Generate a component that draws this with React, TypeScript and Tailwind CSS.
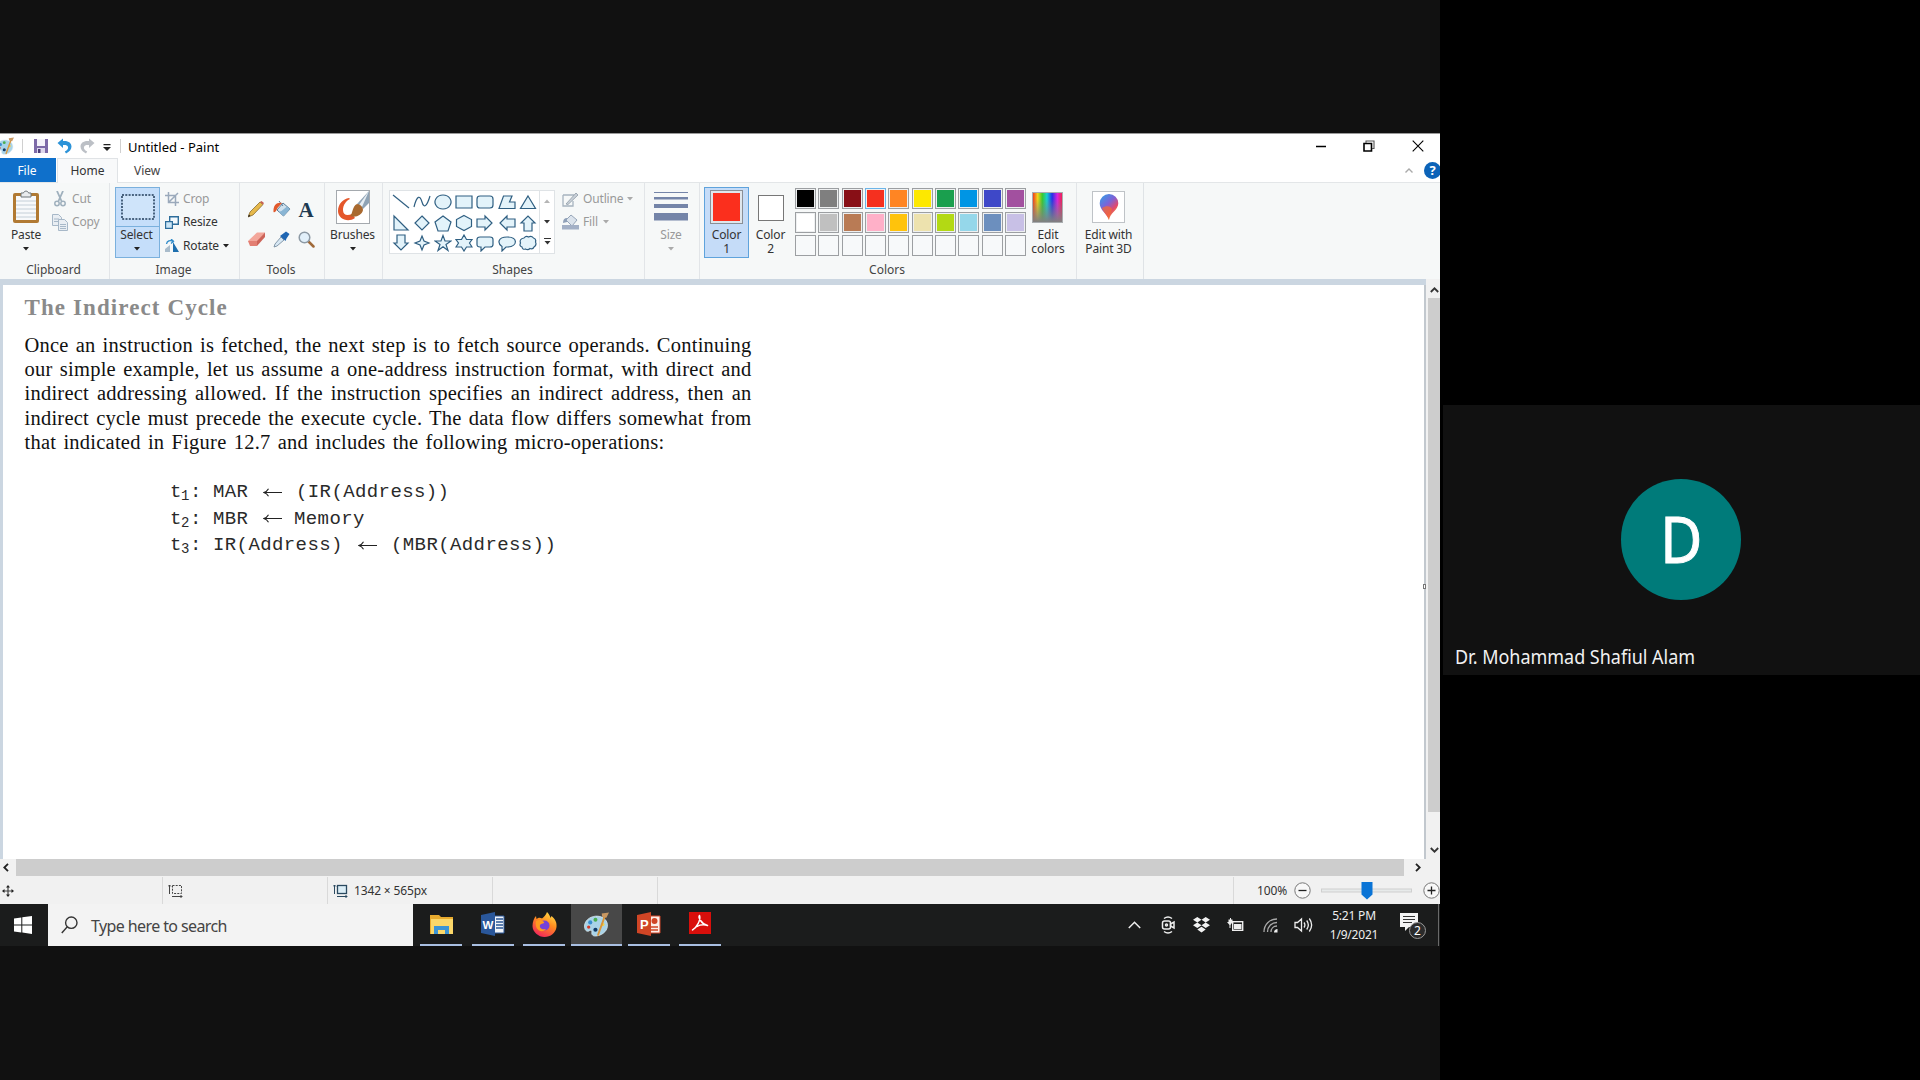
import React from "react";

const ui = "font-['Noto_Sans','Open_Sans',sans-serif]";

function Caret({ className = "text-[#222]" }: { className?: string }) {
  return (
    <svg width="6" height="4" viewBox="0 0 6 4" className={`block shrink-0 ${className}`}>
      <path d="M0 0h6L3 3.6z" fill="currentColor" />
    </svg>
  );
}

function PaletteIcon({ size }: { size: number }) {
  return (
    <svg width={size} height={size} viewBox="0 0 24 24" className="block shrink-0">
      <path d="M11 4C5 4.500 0 9 .5 14.500 1 19 4 19 5 18c1.500-1 3-.5 2.500 1.500C7 22 9 23.500 12 23c7-1 11-6 10.500-11C22 7 17 3.500 11 4z" fill="#a9d3e8" stroke="#dfeef6" strokeWidth=".7" />
      <circle cx="6" cy="10" r="2" fill="#3a8fd0" />
      <circle cx="11" cy="7.500" r="1.900" fill="#4caf50" />
      <circle cx="4.500" cy="14.500" r="1.600" fill="#d43a2a" />
      <circle cx="11" cy="17" r="2" fill="#123a66" />
      <circle cx="18" cy="12" r="1.700" fill="#f2d24b" />
      <path d="M13.500 22 20 4" stroke="#d9963c" strokeWidth="1.800" strokeLinecap="round" />
      <path d="M17 1.500 24 .5l-2.500 5-4-.8z" fill="#c99862" />
    </svg>
  );
}

function TitleBar() {
  return (
    <div className="flex h-[25px] items-center border-t border-[#9a9a9a] bg-white">
      <div className="flex w-[22px] items-center overflow-hidden">
        <div className="-ml-[4px]"><PaletteIcon size={18} /></div>
      </div>
      <div className="h-[14px] w-px bg-[#d0d0d0]" />
      <svg width="16" height="16" viewBox="0 0 16 16" className="ml-[10px] block">
        <path d="M1 1h14v14H1z" fill="#7d6aa8" />
        <path d="M4 1h8v7H4z" fill="#f4f2fa" />
        <path d="M4 10h8v5H4z" fill="#ddd7ec" />
        <path d="M5 11h2.500v4H5z" fill="#4d3d78" />
      </svg>
      <svg width="16" height="16" viewBox="0 0 16 16" className="ml-[8px] block">
        <path d="M.5 5 6 .5V3c5.500-.5 8.500 2 8.500 5.500 0 3-2 5-5.500 7l-1.200-2C10.500 12 11.500 10.500 11 9 10.500 7.300 9 6.800 6 7v3z" fill="#2c93d8" />
      </svg>
      <svg width="16" height="16" viewBox="0 0 16 16" className="ml-[6px] block">
        <path d="M15.500 5 10 .5V3C4.500 2.500 1.500 5 1.500 8.500c0 3 2 5 5.500 7l1.200-2C5.500 12 4.500 10.500 5 9c.5-1.700 2-2.200 5-2v3z" fill="#bcc0c6" />
      </svg>
      <svg width="8" height="8" viewBox="0 0 8 8" className="ml-[8px] mt-[3px] block">
        <path d="M.5 0h7v1.300h-7zM0 3h8L4 7z" fill="#222" />
      </svg>
      <div className="ml-[9px] h-[14px] w-px bg-[#d0d0d0]" />
      <div className={`${ui} ml-[7px] pt-px text-[13px] leading-[24px] text-black`}>Untitled - Paint</div>
      <div className="ml-auto flex items-center">
        <svg width="12" height="12" viewBox="0 0 12 12" className="block"><path d="M1 6.500h10" stroke="#000" strokeWidth="1.500" /></svg>
        <svg width="12" height="12" viewBox="0 0 12 12" className="ml-[36px] block" fill="none" stroke="#000">
          <path d="M1 3.500h7.500V11H1z" strokeWidth="1.600" />
          <path d="M3 3V1h8v7.500H9" stroke="#555" strokeWidth="1.100" />
        </svg>
        <svg width="12" height="12" viewBox="0 0 12 12" className="ml-[37px] mr-[16px] block"><path d="M.7.7l10.600 10.600M11.300.7.7 11.300" stroke="#000" strokeWidth="1.100" /></svg>
      </div>
    </div>
  );
}

function TabRow() {
  return (
    <div className={`${ui} flex h-[25px] items-stretch border-b border-[#e3e6e8] bg-white text-[12px] leading-[25px]`}>
      <div className="w-[56px] bg-[#0f70cb] pr-[2px] text-center text-white">File</div>
      <div className="ml-px h-[25px] w-[61px] border-x border-t border-[#e0e3e6] bg-[#f8f9fa] text-center leading-[24px] text-[#333]">Home</div>
      <div className="ml-[16px] text-[#444]">View</div>
      <div className="ml-auto flex items-center">
        <svg width="8" height="5" viewBox="0 0 8 5" className="block"><path d="M.5 4.500 4 1l3.500 3.500" fill="none" stroke="#aaa" strokeWidth="1.400" /></svg>
        <div className="ml-[11px] h-[17px] w-[16px] overflow-hidden">
          <div className="h-[17px] w-[17px] rounded-full bg-[#0c63b8] text-center text-[13px] font-bold leading-[17px] text-white">?</div>
        </div>
      </div>
    </div>
  );
}

function Group({ label, width, children, last }: { label?: string; width: string; children: React.ReactNode; last?: boolean }) {
  return (
    <div className={`flex shrink-0 flex-col border-r ${last ? "border-[#dfe3e6]" : "border-[#e2e5e8]"} ${width}`}>
      <div className="flex h-[79px] items-start">{children}</div>
      <div className="h-[16px] pr-[2px] text-center text-[12px] leading-[16px] tracking-normal text-[#444]">{label}</div>
    </div>
  );
}

function ClipboardGroup() {
  return (
    <Group label="Clipboard" width="w-[110px]">
      <div className="ml-[3px] flex w-[46px] flex-col items-center pt-[7px]">
        <svg width="28" height="34" viewBox="0 0 28 34" className="block">
          <rect x="1" y="3" width="26" height="30" rx="2" fill="#b17a33" />
          <path d="M4 6h20v24H4z" fill="#f7f9fb" />
          <path d="M4 11h20M4 15h20M4 19h20M4 23h20M4 27h20" stroke="#c4cfd8" strokeWidth="1" />
          <path d="M9 3h2.500C12 .5 16 .5 16.500 3H19v4H9z" fill="#e9ecee" stroke="#6c7479" strokeWidth="1" />
        </svg>
        <div className="mt-[3px] text-[12px] leading-[16px] text-[#333]">Paste</div>
        <Caret className="mt-[4px] text-[#222]" />
      </div>
      <div className="ml-[3px] flex flex-col text-[12px] text-[#9a9a9a]">
        <div className="mt-[6px] flex h-[20px] items-center">
          <svg width="16" height="16" viewBox="0 0 16 16" className="mr-[4px] block" fill="none" stroke="#9fb0bd">
            <path d="M5 0l4.500 10M11 0 6.500 10" strokeWidth="1.800" />
            <circle cx="5" cy="12.500" r="2.200" strokeWidth="1.500" /><circle cx="11" cy="12.500" r="2.200" strokeWidth="1.500" />
          </svg>
          Cut
        </div>
        <div className="mt-[3px] flex h-[20px] items-center">
          <svg width="16" height="17" viewBox="0 0 16 17" className="mr-[4px] block" fill="#e9eef3" stroke="#a7b8c8">
            <path d="M.5.5h6l3 3v8h-9zM2 5h5M2 7.500h5" />
            <path d="M6.500 5.500h6l3 3v8h-9zM8 10.500h6M8 12.500h6M8 14.500h6" />
          </svg>
          Copy
        </div>
      </div>
    </Group>
  );
}

function ImageGroup() {
  return (
    <Group label="Image" width="w-[130px]">
      <div className="ml-[5px] mt-[4px] flex h-[71px] w-[45px] flex-col items-center border border-[#7ab0dd] bg-[#c5defa]">
        <div className="flex h-[39px] w-full items-center justify-center border-b border-[#7ab0dd]">
          <svg width="34" height="26" viewBox="0 0 34 26" className="block"><rect x="1" y="1" width="32" height="24" fill="#cfe4fa" stroke="#1f3a57" strokeWidth="1.500" strokeDasharray="2 1.300" /></svg>
        </div>
        <div className="pr-[2px] text-[12px] leading-[16px] text-[#333]">Select</div>
        <Caret className="mr-[2px] mt-[4px] text-[#222]" />
      </div>
      <div className="ml-[5px] flex flex-col text-[12px] text-[#333]">
        <div className="mt-[6px] flex h-[20px] items-center text-[#999]">
          <svg width="14" height="14" viewBox="0 0 14 14" className="mr-[4px] block" fill="none" stroke="#9aa9bb" strokeWidth="1.500"><path d="M3.500 0v10.500H14M0 3.500h10.500V14M3.500 10.500 13 1" /></svg>
          Crop
        </div>
        <div className="mt-[3px] flex h-[20px] items-center">
          <svg width="14" height="13" viewBox="0 0 14 13" className="mr-[4px] block"><path d="M4.700.7h8.600v7.600H4.700z" fill="#f3f9fd" stroke="#2d6d9b" strokeWidth="1.400" /><path d="M.6 5.600h6.800v6.800H.6z" fill="#cbe6f7" stroke="#2d6d9b" strokeWidth="1.200" /></svg>
          Resize
        </div>
        <div className="mt-[4px] flex h-[20px] items-center">
          <svg width="14" height="14" viewBox="0 0 14 14" className="mr-[4px] block"><path d="M0 13V10l5-4v7z" fill="#a9bccb" /><path d="M8 13V3l6 10z" fill="#1e6fae" /><path d="M1.500 5C2 2 5 .8 8 2.200M6 0l2.500 2.300L6 4.500" fill="none" stroke="#2f8bc9" strokeWidth="1.300" /></svg>
          Rotate
          <Caret className="ml-[4px] text-[#222]" />
        </div>
      </div>
    </Group>
  );
}

function ToolsGroup() {
  return (
    <Group label="Tools" width="w-[85px]">
      <div className="ml-[8px] mt-[13px] grid grid-cols-[25px_25px_18px] grid-rows-[29px_29px] items-center">
        <svg width="16" height="17" viewBox="0 0 16 17" className="mt-[-2px]"><path d="M0 16l2-5L12 1l3 2.500L5 14z" fill="#e6b94b" stroke="#7d5d22" strokeWidth=".7" /><path d="M12 1l1.500-1L16 2l-1 1.500z" fill="#c75d52" /><path d="M0 16l1-2.500 1.500 1.500z" fill="#222" /></svg>
        <svg width="18" height="17" viewBox="0 0 18 17" className="mt-[-2px]"><path d="M4 9 10 2l7 6-6.500 7z" fill="#cfe1ee" stroke="#5b7d97" strokeWidth="1" /><path d="M8.500 10 14 5.500l3 2.500-6.500 7-5-4z" fill="#89b5d4" /><path d="M10 5 6 0" stroke="#5b7d97" fill="none" /><path d="M9 2C4 1 0 4 .5 11c2 1 3-2 4-4z" fill="#e1592c" /></svg>
        <div className="mt-[-2px] w-[16px] text-center font-['Liberation_Serif',serif] text-[21px] font-bold leading-[20px] text-[#1e3a52]">A</div>
        <svg width="18" height="15" viewBox="0 0 18 15"><path d="M0 9 9 .5h8L9 10z" fill="#f3a79b" /><path d="M0 9h9v5H2z" fill="#e37f73" /><path d="M9 14V9l8-8.500V5z" fill="#cd6459" /></svg>
        <svg width="17" height="17" viewBox="0 0 17 17"><path d="M1 16l1-3 6-7 3 3-7 6z" fill="#d8e8f4" stroke="#6c8498" strokeWidth=".8" /><path d="M7 5l2-1.500L13 .5l3.500 2.500-3 4.500-1 2.500z" fill="#1f66b3" /></svg>
        <svg width="17" height="17" viewBox="0 0 17 17"><path d="M10.500 10.500 15.500 15.500" stroke="#a06a3a" strokeWidth="2.500" strokeLinecap="round" /><circle cx="6.500" cy="6.500" r="5.300" fill="#e2f0fa" stroke="#8d9aa5" strokeWidth="1.500" /></svg>
      </div>
    </Group>
  );
}

function BrushesGroup() {
  return (
    <Group width="w-[58px]">
      <div className="flex w-[55px] flex-col items-center pt-[7px]">
        <svg width="34" height="34" viewBox="0 0 34 34" className="block">
          <rect x=".5" y=".5" width="33" height="33" fill="#fff" stroke="#a4a9ae" />
          <path d="M13 8C7 9 2 14 2 21c0 8 10 12 17 7l-3-4c-5 2-9 1-9-4 0-5 3-9 7-11z" fill="#e4572b" />
          <path d="M33 1v12l-6 6-6-5z" fill="#8fa3b5" /><path d="M33 1 23 15l3 2z" fill="#e6edf2" />
          <path d="M21 14c3 0 6 3 6 6-1 5-7 8-13 6 3-2 2-10 7-12z" fill="#a9692f" />
        </svg>
        <div className="mt-[3px] text-[12px] leading-[16px] text-[#333]">Brushes</div>
        <Caret className="mt-[4px] text-[#222]" />
      </div>
    </Group>
  );
}

const shapes = [
  "M1 2 17 15", "M1 14C4 2 7 2 9 9s5 4 8-6", "M9 2a8 7 0 1 0 .01 0z", "M1 3h16v12H1z", "M4 3h10q3 0 3 3v6q0 3-3 3H4q-3 0-3-3V6q0-3 3-3z", "M1 15.500 4 10V3h9v6h4v6.500h-6V12H7z", "M9 3 16.500 15.500h-15z",
  "M2 2v14h14z", "M9 2l7 7-7 7-7-7z", "M9 2l8 6-3 9H4L1 8z", "M9 1.500l7.500 4v7L9 16.500l-7.500-4v-7z", "M1 5h8V2l7 7-7 7v-3H1z", "M17 5H9V2L2 9l7 7v-3h8z", "M5 17V9H2l7-7 7 7h-3v8z",
  "M5 1v8H2l7 7 7-7h-3V1z", "M9 2l2 5 5 2-5 2-2 5-2-5-5-2 5-2z", "M9 1.500l2 5.500h6l-5 3.500 2 6-5-3.700-5 3.700 2-6L1 7h6z", "M9 1l2.500 4.500H17L14.500 9l2.500 4h-5.500L9 17l-2.500-4H1L3.500 9 1 5.500h5.500z", "M4 3h10q3 0 3 2.500v5q0 2.500-3 2.500H9l-4 4v-4H4q-3 0-3-2.500v-5Q1 3 4 3z", "M9 3c11 0 11 9 1 10H8l-4 4v-4.500C-1 9 0 3 9 3z", "M5 4q2-2.500 4.500-1 3-1.500 5 1 3 1 2 4 1.500 3-1.500 5-1 2.500-4 1.500-2 2-4.500.5-3 1-3.500-2-3-1-1.500-4Q0 5 5 4z",
];
shapes[5] = "M1 15.500 5.500 3H14l-2.500 6H17v6.500z";

function ShapesGroup() {
  return (
    <Group label="Shapes" width="w-[262px]">
      <div className="ml-[6px] mt-[7px] flex h-[64px] w-[166px] border border-[#dfe3e6] bg-white">
        <div className="grid w-[150px] grid-cols-[repeat(7,21.200px)] grid-rows-[21px_21px_20px]">
          {shapes.map((d, i) => (
            <svg key={i} width="18" height="18" viewBox="0 0 18 18" className="m-auto block"><path d={d} fill={i < 2 ? "none" : "#e3f3fa"} stroke="#2f5f82" strokeWidth="1.200" /></svg>
          ))}
        </div>
        <div className="flex w-[15px] flex-col items-center justify-between border-l border-[#dfe3e6] py-[8px]">
          <Caret className="rotate-180 text-[#b5b5b5]" />
          <Caret className="mt-[2px] text-[#333]" />
          <svg width="7" height="7" viewBox="0 0 7 7"><path d="M0 0h7v1H0zM.5 3h6l-3 3.500z" fill="#333" /></svg>
        </div>
      </div>
      <div className="ml-[7px] flex flex-col text-[12px] text-[#999]">
        <div className="mt-[6px] flex h-[20px] items-center">
          <svg width="17" height="15" viewBox="0 0 17 15" className="mr-[4px] block"><path d="M1 3h11M1 3v11h10V9" fill="none" stroke="#a7b3bf" strokeWidth="1.300" /><path d="M4 12 14 1l2 2L6 12.500z" fill="#c9d0d8" stroke="#8e9aa6" strokeWidth=".8" /></svg>
          Outline
          <Caret className="ml-[4px] text-[#aaa]" />
        </div>
        <div className="mt-[3px] flex h-[20px] items-center">
          <svg width="17" height="16" viewBox="0 0 17 16" className="mr-[4px] block"><path d="M4 6l5-5 6 5-5 6z" fill="#dbe3ec" stroke="#96a5b8" /><path d="M1 9q0-5 4-5v4z" fill="#8fa0b8" /><path d="M0 11h17v4.500H0z" fill="#a3b0c6" /></svg>
          Fill
          <Caret className="ml-[5px] text-[#aaa]" />
        </div>
      </div>
    </Group>
  );
}

function SizeGroup() {
  return (
    <Group width="w-[55px]">
      <div className="flex w-[52px] flex-col items-center">
        <svg width="34" height="29" viewBox="0 0 34 29" className="mt-[9px] block" fill="#7484a8"><path d="M0 0h34v1H0zM0 5h34v2.500H0zM0 12h34v4H0zM0 21h34v7.500H0z" /></svg>
        <div className="mt-[6px] text-[12px] leading-[16px] text-[#999]">Size</div>
        <Caret className="mt-[4px] text-[#aaa]" />
      </div>
    </Group>
  );
}

const palette = [
  "bg-black", "bg-[#7f7f7f]", "bg-[#880f16]", "bg-[#f5301f]", "bg-[#ff8523]", "bg-[#fde800]", "bg-[#1a9f4e]", "bg-[#0095e4]", "bg-[#3e48c8]", "bg-[#a2509f]",
  "bg-white", "bg-[#c0c0c0]", "bg-[#b97b55]", "bg-[#ffb0c8]", "bg-[#ffc30c]", "bg-[#ede2ae]", "bg-[#b3d914]", "bg-[#95d7ea]", "bg-[#6c8fbe]", "bg-[#c8c0e6]",
];

function ColorsGroup() {
  return (
    <Group label="Colors" width="w-[377px]">
      <div className="ml-[4px] mt-[4px] flex h-[71px] w-[45px] flex-col items-center border border-[#5fa3dc] bg-[#c5dcf8]">
        <div className="mt-[2px] h-[34px] w-[33px] border border-[#8a8f96] bg-[#dfe6ec] p-[2px]"><div className="h-full w-full bg-[#fb2f1d]" /></div>
        <div className="mt-[4px] text-center text-[12px] leading-[14px] text-[#333]">Color<br />1</div>
      </div>
      <div className="flex w-[43px] flex-col items-center">
        <div className="ml-px mt-[12px] h-[26px] w-[26px] border border-[#777] bg-white" />
        <div className="mt-[7px] text-center text-[12px] leading-[14px] text-[#333]">Color<br />2</div>
      </div>
      <div className="ml-[3px] mt-[5px] grid grid-cols-[repeat(10,21px)] grid-rows-[repeat(3,21px)] gap-x-[2.330px] gap-y-[2.500px]">
        {Array.from({ length: 30 }, (_, i) => (
          <div key={i} className={`border p-px ${i === 3 ? "border-[#6db5e8]" : "border-[#9c9fa2]"} ${i < 20 ? "bg-[#eef0f1]" : "bg-[#f7f9fa]"}`}>
            <div className={`h-full w-full ${palette[i] ?? "bg-[#f7f9fa]"}`} />
          </div>
        ))}
      </div>
      <div className="ml-[3px] flex w-[38px] flex-col items-center">
        <div className="mt-[9px] h-[31px] w-[31px] border border-[#a9adb0] bg-[linear-gradient(to_bottom,transparent_20%,#808080_100%),linear-gradient(to_right,#f03c20,#f3d31b_16%,#38c92f_32%,#18cfd0_48%,#2432e8_66%,#d824dc_84%,#ee2250)]" />
        <div className="mt-[5px] whitespace-nowrap text-center text-[12px] leading-[14px] text-[#333]">Edit<br />colors</div>
      </div>
    </Group>
  );
}

function Paint3DGroup() {
  return (
    <Group width="w-[67px]" last>
      <div className="flex w-[63px] flex-col items-center">
        <div className="mt-[8px] flex h-[32px] w-[33px] items-center justify-center border border-[#bfc3c7] bg-white">
          <svg width="20" height="26" viewBox="0 0 20 26">
            <defs>
              <linearGradient id="drop" x1="0" y1="0" x2=".7" y2="1"><stop offset="0" stopColor="#2ba5e8" /><stop offset=".45" stopColor="#7b63d8" /><stop offset=".72" stopColor="#e2486e" /><stop offset="1" stopColor="#f5a623" /></linearGradient>
            </defs>
            <path d="M10 0a9.300 9.300 0 0 1 9.300 9.300C19.300 16 11 19 10 26 8 20 .7 16 .7 9.300A9.300 9.300 0 0 1 10 0z" fill="url(#drop)" />
            <path d="M3 14c4-3 9-2 10 1 0 3-3 6-3 11C8 20 4 18 3 14z" fill="#f26b3a" opacity=".75" />
          </svg>
        </div>
        <div className="mt-[5px] whitespace-nowrap text-center text-[12px] leading-[14px] text-[#333]">Edit with<br />Paint 3D</div>
      </div>
    </Group>
  );
}

function Ribbon() {
  return (
    <div className={`${ui} flex h-[96px] bg-[#f6f8f8] tracking-[-0.150px]`}>
      <ClipboardGroup />
      <ImageGroup />
      <ToolsGroup />
      <BrushesGroup />
      <ShapesGroup />
      <SizeGroup />
      <ColorsGroup />
      <Paint3DGroup />
    </div>
  );
}

function CodeArrow() {
  return (
    <svg width="19" height="9" viewBox="0 0 19 9" className="block shrink-0"><path d="M19 4.500H1M5.500.7Q4 3.500.8 4.500 4 5.500 5.500 8.300" fill="none" stroke="#222" strokeWidth="1.100" /></svg>
  );
}

function MicroOp({ n, left, right, leftWidth, gap }: { n: string; left: string; right: string; leftWidth: string; gap: string }) {
  return (
    <div className="flex h-[26.500px] items-center whitespace-pre">
      <span className="w-[11px]">t</span>
      <span className="w-[9px] pt-[9px] text-[14px]">{n}</span>
      <span className="w-[23px]">:</span>
      <span className={leftWidth}>{left}</span>
      <CodeArrow />
      <span className={gap}>{right}</span>
    </div>
  );
}

const paragraph = [
  "Once an instruction is fetched, the next step is to fetch source operands. Continuing",
  "our simple example, let us assume a one-address instruction format, with direct and",
  "indirect addressing allowed. If the instruction specifies an indirect address, then an",
  "indirect cycle must precede the execute cycle. The data flow differs somewhat from",
];

function Canvas() {
  return (
    <div className="flex h-[580px]">
      <div className="min-w-0 flex-1 border-l-[3px] border-t-[6px] border-[#cbd6e1]">
        <div className="flex h-full border-r-2 border-[#c2c8ce] bg-white">
          <div className="flex-1 pl-[21.500px] pt-[8px]">
            <h1 className="h-[30px] whitespace-nowrap font-['Liberation_Serif',serif] text-[23px] font-bold leading-[30px] tracking-[1.100px] text-[#8a8a8a]">The Indirect Cycle</h1>
            <div className="mt-[10px] w-[727px] font-['Liberation_Serif',serif] text-[20.500px] leading-[24.200px] tracking-[0.240px] text-[#111]">
              {paragraph.map((line) => (
                <p key={line} className="whitespace-nowrap [text-align-last:justify]">{line}</p>
              ))}
              <p className="w-[640px] whitespace-nowrap [text-align-last:justify]">that indicated in Figure 12.7 and includes the following micro-operations:</p>
            </div>
            <div className="ml-[145.500px] mt-[25px] font-['Liberation_Mono',monospace] text-[19px] tracking-[0.400px] text-[#2a2a2a]">
              <MicroOp n="1" left="MAR" right="(IR(Address))" leftWidth="w-[50px]" gap="ml-[14px]" />
              <MicroOp n="2" left="MBR" right="Memory" leftWidth="w-[50px]" gap="ml-[12px]" />
              <MicroOp n="3" left="IR(Address)" right="(MBR(Address))" leftWidth="w-[145px]" gap="ml-[14px]" />
            </div>
          </div>
          <div className="mr-[-2px] mt-[299px] h-[5px] w-[3px] border border-[#777] bg-white" />
        </div>
      </div>
      <div className="flex w-[14px] flex-col items-center bg-[#f1f1f1]">
        <div className="flex h-[19px] items-center pl-[2px] pt-[3px]"><svg width="9" height="6" viewBox="0 0 9 6"><path d="M.8 5 4.500 1.300 8.200 5" fill="none" stroke="#333" strokeWidth="1.800" /></svg></div>
        <div className="ml-[2px] h-[514px] w-[12px] bg-[#cdcdcd]" />
        <div className="mt-auto pb-[6px] pl-[2px]"><svg width="9" height="6" viewBox="0 0 9 6" className="block"><path d="M.8 1 4.500 4.700 8.200 1" fill="none" stroke="#333" strokeWidth="1.800" /></svg></div>
      </div>
    </div>
  );
}

function HScroll() {
  return (
    <div className="flex h-[17px] items-center bg-[#f1f1f1]">
      <div className="w-[16px] pl-[3px]"><svg width="6" height="9" viewBox="0 0 6 9" className="block"><path d="M5 .8 1.300 4.500 5 8.200" fill="none" stroke="#222" strokeWidth="1.800" /></svg></div>
      <div className="h-full w-[1388px] bg-[#cdcdcd]" />
      <svg width="6" height="9" viewBox="0 0 6 9" className="ml-[11px] block"><path d="M1 .8 4.700 4.500 1 8.200" fill="none" stroke="#222" strokeWidth="1.800" /></svg>
    </div>
  );
}

function StatusBar() {
  const cell = "flex h-full shrink-0 items-center border-r border-[#d9d9d9]";
  return (
    <div className={`${ui} flex h-[28px] items-center bg-[#f1f1f1] pt-px text-[12px] tracking-[-0.150px] text-[#333]`}>
      <div className={`${cell} w-[163px] pl-[2px]`}>
        <svg width="12" height="12" viewBox="0 0 12 12"><path d="M6 1v10M1 6h10" stroke="#444" strokeWidth="1.200" /><path d="M6 0l2 2.500H4zM6 12l2-2.500H4zM0 6l2.500-2v4zM12 6 9.500 4v4z" fill="#222" /></svg>
      </div>
      <div className={`${cell} w-[165px] pl-[5px]`}>
        <svg width="15" height="14" viewBox="0 0 15 14" fill="none" stroke="#444"><rect x="4.500" y="1.500" width="9" height="8" strokeDasharray="2 1.200" /><path d="M1.500 1v9M0 2.500 1.500 1 3 2.500M4 12.500h10M12.500 11l1.500 1.500-1.500 1.500" /></svg>
      </div>
      <div className={`${cell} w-[165px] pl-[5px]`}>
        <svg width="15" height="14" viewBox="0 0 15 14" fill="none" stroke="#2b4a60"><rect x="4.500" y="1.500" width="9" height="8" fill="#dceef7" strokeWidth="1.300" /><path d="M1.500 1v9M0 2.500 1.500 1 3 2.500M4 12.500h10M12.500 11l1.500 1.500-1.500 1.500" /></svg>
        <span className="ml-[6px] whitespace-nowrap">1342 × 565px</span>
      </div>
      <div className={`${cell} w-[165px]`} />
      <div className={`${cell} w-[576px]`} />
      <div className="ml-[23px] w-[37px]">100%</div>
      <svg width="17" height="17" viewBox="0 0 17 17" className="block shrink-0"><circle cx="8.500" cy="8.500" r="7.700" fill="#f8f8f8" stroke="#777" /><path d="M4.500 8.500h8" stroke="#222" strokeWidth="1.300" /></svg>
      <svg width="91" height="18" viewBox="0 0 91 18" className="ml-[10px] block shrink-0"><rect x=".5" y="7" width="90" height="3" fill="#e7eaea" stroke="#cfcfcf" /><path d="M40.500 0h11v12.500L46 17.500l-5.500-5z" fill="#0a74d6" /></svg>
      <svg width="17" height="17" viewBox="0 0 17 17" className="ml-[11px] block shrink-0"><circle cx="8.500" cy="8.500" r="7.700" fill="#f8f8f8" stroke="#777" /><path d="M4.500 8.500h8M8.500 4.500v8" stroke="#222" strokeWidth="1.300" /></svg>
    </div>
  );
}

function AppTile({ children, active, className }: { children: React.ReactNode; active?: boolean; className: string }) {
  return (
    <div className={`flex h-[42px] shrink-0 flex-col items-center border-b-2 border-[#a9bfe2] ${active ? "bg-[#484848]" : ""} ${className}`}>
      <div className="flex flex-1 items-center">{children}</div>
    </div>
  );
}

function Taskbar() {
  return (
    <div className={`${ui} flex h-[42px] items-center bg-[#1b1c1c]`}>
      <div className="flex w-[48px] items-center pl-[14px]">
        <svg width="18" height="18" viewBox="0 0 18 18" fill="#fff"><path d="M0 2.500 7.300 1.400v7.100H0zM8.300 1.300 18 0v8.500H8.300zM0 9.500h7.300v7L0 15.500zM8.300 9.500H18V18l-9.700-1.400z" /></svg>
      </div>
      <div className="flex h-[42px] w-[365px] items-center bg-[#f3f3f3]">
        <svg width="17" height="18" viewBox="0 0 17 18" className="ml-[13px] block" fill="none" stroke="#333" strokeWidth="1.400"><circle cx="10.300" cy="6.700" r="5.700" /><path d="M6.300 10.800.8 17" /></svg>
        <span className="ml-[13px] pt-px text-[16px] tracking-[-0.600px] text-[#444]">Type here to search</span>
      </div>
      <AppTile className="ml-[7px] w-[42px]">
        <svg width="23" height="21" viewBox="0 0 23 21"><path d="M0 1h9l2 2h12v17H0z" fill="#e8ab2e" /><path d="M1 5h22v15H1z" fill="#fbd769" /><path d="M4 20v-8h15v8h-4v-4H8v4z" fill="#3c94d4" /></svg>
      </AppTile>
      <AppTile className="ml-[10px] w-[42px]">
        <svg width="24" height="24" viewBox="0 0 24 24"><path d="M12 4h11v17H12z" fill="#f2f5fa" stroke="#2b5797" /><path d="M15 7h7M15 10h7M15 13h7M15 16h7" stroke="#2b5797" strokeWidth="1.300" /><path d="M0 3 14 0v24L0 21z" fill="#2a579a" /><text x="1.500" y="16.500" fontSize="11.500" fontWeight="700" fill="#fff" fontFamily="Liberation Sans, sans-serif">W</text></svg>
      </AppTile>
      <AppTile className="ml-[9px] w-[42px]">
        <svg width="25" height="25" viewBox="0 0 25 25">
          <defs><linearGradient id="fox" x1=".8" y1="0" x2=".3" y2="1"><stop offset="0" stopColor="#ffe14a" /><stop offset=".45" stopColor="#ff8a1f" /><stop offset="1" stopColor="#f0245c" /></linearGradient></defs>
          <path d="M15 0c2 2 3 4 3.500 6l1-2c4 3 5.500 7 5 11-.8 6-6 10-12 10S.5 20 .5 14C.5 10 2 6 4 4l.5 3C7 5 9 6 10 6.500 12 5 14 3 15 0z" fill="url(#fox)" />
          <circle cx="12.500" cy="13.500" r="5" fill="#7542d8" /><path d="M4 9c3-2 6-1 8 1 1 2-3 1-4 3-1 3 2 5 6 4-4 5-12 1-10-8z" fill="#ff9a1f" />
        </svg>
      </AppTile>
      <AppTile active className="ml-[6px] w-[51px]"><PaletteIcon size={25} /></AppTile>
      <AppTile className="ml-[6px] w-[42px]">
        <svg width="24" height="24" viewBox="0 0 24 24"><path d="M12 4h11v17H12z" fill="#fbeee9" stroke="#d04526" /><circle cx="17.500" cy="9" r="3" fill="#d04526" /><path d="M14 15h7M14 18h7" stroke="#d04526" strokeWidth="1.300" /><path d="M0 3 14 0v24L0 21z" fill="#d04525" /><text x="3" y="17" fontSize="13" fontWeight="700" fill="#fff" fontFamily="Liberation Sans, sans-serif">P</text></svg>
      </AppTile>
      <AppTile className="ml-[9px] w-[42px]">
        <svg width="22" height="22" viewBox="0 0 22 22" className="mb-[2px]"><path d="M0 0h22v22H0z" fill="#d90f0b" /><path d="M3.500 18C8 15 12 8 10.500 3.500 9 5 12 12 18.500 13.500 14 11.500 8 13 3.500 18z" fill="none" stroke="#fff" strokeWidth="1.500" strokeLinejoin="round" /></svg>
      </AppTile>
      <div className="ml-auto flex items-center text-[#eee]">
        <svg width="13" height="8" viewBox="0 0 13 8" className="block"><path d="M.8 7 6.500 1.300 12.200 7" fill="none" stroke="#eee" strokeWidth="1.500" /></svg>
        <svg width="14" height="18" viewBox="0 0 14 18" className="ml-[20px] block" fill="none" stroke="#eee" strokeWidth="1.500"><rect x="1.500" y="5" width="8" height="8" rx="2" /><path d="M9.500 8l3.500-2v6l-3.500-2zM3 2.500Q7-.5 11 2.500M3 15.500q4 3 8 0" /><circle cx="5.500" cy="9" r="1" /></svg>
        <svg width="17" height="16" viewBox="0 0 17 16" className="ml-[18px] block" fill="#f2f2f2"><path d="M4.300 0l4.200 2.700-4.200 2.700L0 2.700zM12.700 0 17 2.700l-4.300 2.700-4.200-2.700zM4.300 5.600l4.200 2.700L4.300 11 0 8.300zM12.700 5.600 17 8.300 12.700 11 8.500 8.300zM8.500 9.800l4.200 2.700-4.200 2.900-4.200-2.900z" /></svg>
        <svg width="17" height="14" viewBox="0 0 17 14" className="ml-[17px] block"><rect x="5.700" y="3.700" width="10" height="8.600" fill="none" stroke="#eee" strokeWidth="1.400" /><path d="M7 6h7.500v5H7zM0 4h1.500V1.500H3V0h1v1.500h1.500V4l-2 3v3H2.500V7z" fill="#eee" /></svg>
        <svg width="15" height="15" viewBox="0 0 15 15" className="ml-[19px] block" fill="none" stroke="#aaa" strokeWidth="1.300"><path d="M1 14C1 6.500 6.500 1 14 1M4.500 14c0-5.500 4-9.500 9.500-9.500M8 14c0-3.500 2.500-6 6-6" /><path d="M14.500 14.500V11c-2 0-3.500 1.500-3.500 3.500z" fill="#eee" stroke="none" /></svg>
        <svg width="19" height="16" viewBox="0 0 19 16" className="ml-[16px] block" fill="none" stroke="#eee" strokeWidth="1.300"><path d="M1 5.500h2.500L7.500 2v12l-4-3.500H1zM10 5.500q1.800 2.500 0 5M12.700 3.500q3.300 4.500 0 9M15.300 1.500q4.700 6.500 0 13" /></svg>
        <div className="ml-[12px] w-[58px] whitespace-nowrap text-center text-[12px] leading-[19px] tracking-[-0.200px]">5:21 PM<br />1/9/2021</div>
        <div className="relative ml-[17px] mr-[12px] h-[25px] w-[26px]">
          <svg width="18" height="18" viewBox="0 0 18 18" className="block"><path d="M0 0h18v14h-9l-4 4v-4H0z" fill="#f4f4f4" /><path d="M3 3.500h12M3 6.500h12M3 9.500h9" stroke="#333" strokeWidth="1.200" /></svg>
          <div className="absolute left-[9px] top-[9px] h-[17px] w-[17px] rounded-full border border-[#999] bg-[#2b2b2b] text-center text-[12px] leading-[15px] text-white">2</div>
        </div>
        <div className="mr-px h-[42px] w-px bg-[#6a6a6a]" />
      </div>
    </div>
  );
}

export default function App() {
  return (
    <div className="flex h-[1080px] w-[1920px] overflow-hidden bg-black">
      <div className="flex w-[1440px] shrink-0 flex-col overflow-hidden bg-[#111111] pt-[133px]">
        <TitleBar />
        <TabRow />
        <Ribbon />
        <Canvas />
        <HScroll />
        <StatusBar />
        <Taskbar />
      </div>
      <div className="flex flex-1 items-start pl-[3px] pt-[405px]">
        <div className={`${ui} flex h-[270px] w-full flex-col bg-[#111111] text-white`}>
          <div className="ml-[178px] mt-[74px] flex h-[121px] w-[120px] items-center justify-center rounded-full bg-[#007b7a] text-[64px] leading-none"><span className="-mt-[2px] scale-x-[0.900] [-webkit-text-stroke:1px_white]">D</span></div>
          <div className="ml-[12px] mt-[43px] origin-left scale-x-[0.898] whitespace-nowrap text-[20px] leading-[28px] text-[#f1f1f1]">Dr. Mohammad Shafiul Alam</div>
        </div>
      </div>
    </div>
  );
}
